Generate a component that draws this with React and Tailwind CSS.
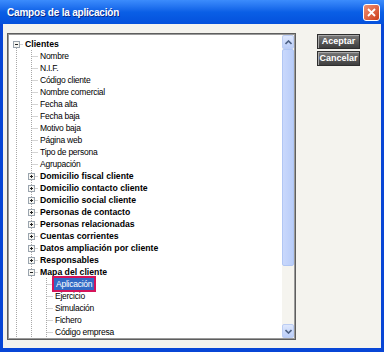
import React from 'react'

const FONT = { fontFamily: '"Liberation Sans", Arial, sans-serif' }

// depth: 0 root, 1 child, 2 grandchild; kind: 'open' | 'closed' | 'leaf'
const ROWS = [
  { t: 'Clientes', d: 0, k: 'open', b: true },
  { t: 'Nombre', d: 1, k: 'leaf' },
  { t: 'N.I.F.', d: 1, k: 'leaf' },
  { t: 'Código cliente', d: 1, k: 'leaf' },
  { t: 'Nombre comercial', d: 1, k: 'leaf' },
  { t: 'Fecha alta', d: 1, k: 'leaf' },
  { t: 'Fecha baja', d: 1, k: 'leaf' },
  { t: 'Motivo baja', d: 1, k: 'leaf' },
  { t: 'Página web', d: 1, k: 'leaf' },
  { t: 'Tipo de persona', d: 1, k: 'leaf' },
  { t: 'Agrupación', d: 1, k: 'leaf' },
  { t: 'Domicilio fiscal cliente', d: 1, k: 'closed', b: true },
  { t: 'Domicilio contacto cliente', d: 1, k: 'closed', b: true },
  { t: 'Domicilio social cliente', d: 1, k: 'closed', b: true },
  { t: 'Personas de contacto', d: 1, k: 'closed', b: true },
  { t: 'Personas relacionadas', d: 1, k: 'closed', b: true },
  { t: 'Cuentas corrientes', d: 1, k: 'closed', b: true },
  { t: 'Datos ampliación por cliente', d: 1, k: 'closed', b: true },
  { t: 'Responsables', d: 1, k: 'closed', b: true },
  { t: 'Mapa del cliente', d: 1, k: 'open', b: true },
  { t: 'Aplicación', d: 2, k: 'leaf', sel: true },
  { t: 'Ejercicio', d: 2, k: 'leaf' },
  { t: 'Simulación', d: 2, k: 'leaf' },
  { t: 'Fichero', d: 2, k: 'leaf' },
  { t: 'Código empresa', d: 2, k: 'leaf' },
]

const LINE = '#a8a8a8'

// One 15x12 indent cell of the tree, drawn as an svg (dotted connectors + expander)
function Cell({ own, kind, first }) {
  return (
    <svg width="15" height="12" className="shrink-0 block">
      {!own && <line x1="7.5" y1="0" x2="7.5" y2="12" stroke={LINE} strokeDasharray="1 1" />}
      {own && (
        <>
          <line x1="7.5" y1={first ? 6 : 0} x2="7.5" y2="12" stroke={LINE} strokeDasharray="1 1" />
          <line x1="7.5" y1="6.5" x2="14" y2="6.5" stroke={LINE} strokeDasharray="1 1" />
          {kind !== 'leaf' && (
            <>
              <rect x="4.5" y="3.5" width="6" height="6" fill="#f6f6f2" stroke="#9aa4ae" />
              <line x1="6" y1="6.5" x2="9" y2="6.5" stroke="#222" />
              {kind === 'closed' && <line x1="7.5" y1="5" x2="7.5" y2="8" stroke="#222" />}
            </>
          )}
        </>
      )}
    </svg>
  )
}

function TreeRow({ row, i }) {
  const cells = []
  for (let l = 0; l <= row.d; l++) cells.push(<Cell key={l} own={l === row.d} kind={row.k} first={i === 0} />)
  return (
    <div className="flex h-[12px] items-center whitespace-nowrap">
      {cells}
      {row.sel ? (
        <span className="flex h-[12px] items-center bg-[#316ac5] px-[2px] text-[8.5px] leading-none tracking-[-0.25px] text-white outline-2 outline-[#d4145a]">
          {row.t}
        </span>
      ) : (
        <span
          className={
            row.b
              ? 'pl-[1px] text-[8.7px] font-bold leading-none text-black'
              : 'pl-[1px] text-[8.5px] leading-none tracking-[-0.25px] text-black'
          }
        >
          {row.t}
        </span>
      )}
    </div>
  )
}

function Chevron({ up }) {
  return (
    <svg width="7" height="5" viewBox="0 0 7 5">
      <path d={up ? 'M0.5 4 L3.5 1 L6.5 4' : 'M0.5 1 L3.5 4 L6.5 1'} fill="none" stroke="#4d6185" strokeWidth="1.6" />
    </svg>
  )
}

function ScrollBar() {
  return (
    <div className="flex w-[12px] flex-col bg-[#f5f4ef]">
      <div className="flex h-[14px] items-center justify-center rounded-[2px] border border-[#bccdf3] bg-gradient-to-b from-[#dfe8fd] to-[#bacdf8]">
        <Chevron up />
      </div>
      <div className="h-[217px] rounded-[2px] border border-[#b0c6f4] bg-gradient-to-r from-[#c9d8fc] to-[#b9cdf9]" />
      <div className="flex-1" />
      <div className="flex h-[14px] items-center justify-center rounded-[2px] border border-[#bccdf3] bg-gradient-to-b from-[#dfe8fd] to-[#bacdf8]">
        <Chevron />
      </div>
    </div>
  )
}

function XpButton({ children }) {
  return (
    <button
      type="button"
      className="flex h-[15px] w-[43px] items-center justify-center border border-[#2e2e2e] bg-gradient-to-b from-[#7a7a7a] to-[#3e3e3e] text-[9px] font-bold leading-none text-white shadow-[inset_1px_1px_0_#a8a8a8]"
    >
      {children}
    </button>
  )
}

export default function App() {
  return (
    <div style={FONT} className="flex h-[352px] w-[384px] flex-col bg-[#0846d6]">
      {/* title bar */}
      <div className="flex h-[24px] items-center bg-gradient-to-b from-[#3c8cfc] via-[#0a5fe6] to-[#0550dc] pl-[7px] pr-[4px]">
        <span className="flex-1 text-[10px] font-bold tracking-[-0.2px] text-white [text-shadow:1px_1px_0_#0a2a8a]">
          Campos de la aplicación
        </span>
        <div className="flex h-[17px] w-[17px] items-center justify-center rounded-[3px] border border-white bg-gradient-to-br from-[#ef8f72] to-[#cc3a12]">
          <svg width="9" height="9" viewBox="0 0 9 9">
            <path d="M1 1 L8 8 M8 1 L1 8" stroke="#fff" strokeWidth="1.8" />
          </svg>
        </div>
      </div>

      {/* client area */}
      <div className="mx-[3px] mb-[4px] flex flex-1 items-start gap-[21px] bg-[#f4f3ee] pl-[4px] pt-[9px]">
        <div className="flex h-[307px] w-[289px] border border-[#5e5e5e]">
          <div className="flex flex-1 border border-[#9a9a9a]">
            <div className="flex-1 overflow-hidden bg-white pt-[3px]">
              {ROWS.map((r, i) => (
                <TreeRow key={i} row={r} i={i} />
              ))}
            </div>
            <ScrollBar />
          </div>
        </div>

        <div className="flex flex-col gap-[2px] pt-[1px]">
          <XpButton>Aceptar</XpButton>
          <XpButton>Cancelar</XpButton>
        </div>
      </div>
    </div>
  )
}
